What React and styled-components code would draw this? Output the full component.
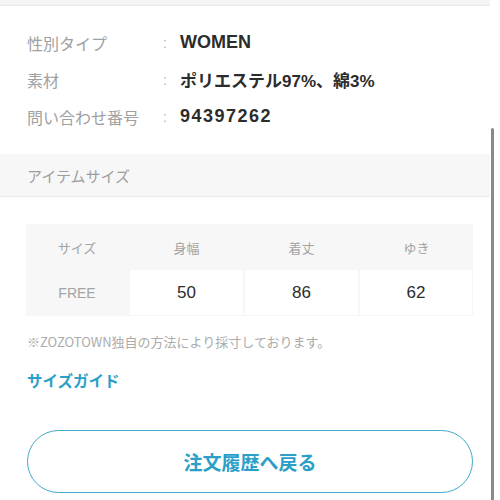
import styled, { createGlobalStyle } from "styled-components";

const GlobalStyle = createGlobalStyle`
  html, body {
    margin: 0;
    padding: 0;
    background: #ffffff;
  }
  body {
    font-family: "Liberation Sans", "Noto Sans CJK JP", sans-serif;
    width: 500px;
    height: 500px;
    overflow: hidden;
  }
`;

const Page = styled.div`
  position: relative;
  width: 500px;
  height: 500px;
  overflow: hidden;
`;

const Content = styled.div`
  width: 490px;
`;

const TopBand = styled.div`
  height: 5px;
  background: #f5f5f5;
  border-bottom: 1px solid #e9e9e9;
`;

const InfoList = styled.dl`
  margin: 0;
  padding: 18px 0 19px 27px;
`;

const InfoRow = styled.div`
  display: grid;
  grid-template-columns: 136px 17px 1fr;
  height: 37px;
  align-items: center;
`;

const Label = styled.dt`
  font-size: 16px;
  color: #a0a0a0;
  font-family: "Noto Sans CJK JP", sans-serif;
`;

const Colon = styled.span`
  font-size: 14px;
  color: #b5b5b5;
`;

const Value = styled.dd`
  margin: 0;
  font-size: ${(p) => p.$size || "18px"};
  font-weight: bold;
  color: #2c2c2c;
  letter-spacing: ${(p) => (p.$digits ? "1.5px" : "0")};
`;

const SectionHead = styled.div`
  height: 42px;
  display: flex;
  align-items: center;
  padding-left: 27px;
  background: #f7f7f7;
  border-bottom: 1px solid #ebebeb;
  font-size: 15px;
  color: #9d9d9d;
  font-family: "Noto Sans CJK JP", sans-serif;
`;

const SizeBody = styled.div`
  padding: 27px 17px 0 26px;
`;

const SizeTable = styled.div`
  display: grid;
  grid-template-columns: 102px 1fr 1fr 1fr;
  grid-template-rows: 46px 46px;
  column-gap: 2px;
  background: #f7f7f7;
  width: 447px;
`;

const Cell = styled.div`
  display: flex;
  align-items: center;
  justify-content: center;
  background: ${(p) => (p.$white ? "#ffffff" : "transparent")};
  color: ${(p) => (p.$white ? "#2c2c2c" : "#a3a3a3")};
  font-size: ${(p) => (p.$white ? "17px" : "13px")};
  font-family: "Liberation Sans", "Noto Sans CJK JP", sans-serif;
  margin-bottom: ${(p) => (p.$white ? "1px" : "0")};
  margin-right: ${(p) => (p.$last ? "1px" : "0")};
`;

const FreeCell = styled(Cell)`
  font-size: 14px;
`;

const Note = styled.p`
  margin: 16px 0 0 1px;
  font-size: 13px;
  color: #ababab;
  font-family: "Noto Sans CJK JP", sans-serif;
`;

const GuideLink = styled.a`
  display: block;
  margin-top: 18px;
  margin-left: 1px;
  font-size: 15.5px;
  font-weight: bold;
  color: #2b9fc8;
  text-decoration: none;
  font-family: "Noto Sans CJK JP", sans-serif;
`;

const BackButton = styled.button`
  display: flex;
  align-items: center;
  justify-content: center;
  box-sizing: border-box;
  margin-top: 39px;
  margin-left: 1px;
  width: 446px;
  height: 63px;
  border: 1.5px solid #40aac8;
  border-radius: 32px;
  background: #ffffff;
  color: #2b9fc8;
  font-size: 19px;
  font-weight: bold;
  font-family: "Noto Sans CJK JP", sans-serif;
`;

const ScrollThumb = styled.div`
  position: absolute;
  left: 491px;
  top: 128px;
  width: 3px;
  height: 380px;
  background: #8a8a8a;
  border-radius: 2px;
`;

const info = [
  { label: "性別タイプ", value: "WOMEN" },
  { label: "素材", value: "ポリエステル97%、綿3%", size: "17px" },
  { label: "問い合わせ番号", value: "94397262", digits: true },
];

const heads = ["サイズ", "身幅", "着丈", "ゆき"];
const sizes = ["50", "86", "62"];

export default function App() {
  return (
    <Page>
      <GlobalStyle />
      <Content>
        <TopBand />
        <InfoList>
          {info.map((r) => (
            <InfoRow key={r.label}>
              <Label>{r.label}</Label>
              <Colon>:</Colon>
              <Value $digits={r.digits} $size={r.size}>
                {r.value}
              </Value>
            </InfoRow>
          ))}
        </InfoList>
        <SectionHead>アイテムサイズ</SectionHead>
        <SizeBody>
          <SizeTable>
            {heads.map((h) => (
              <Cell key={h}>{h}</Cell>
            ))}
            <FreeCell>FREE</FreeCell>
            {sizes.map((s, i) => (
              <Cell key={i} $white $last={i === sizes.length - 1}>
                {s}
              </Cell>
            ))}
          </SizeTable>
          <Note>※ZOZOTOWN独自の方法により採寸しております。</Note>
          <GuideLink href="#">サイズガイド</GuideLink>
          <BackButton>注文履歴へ戻る</BackButton>
        </SizeBody>
      </Content>
      <ScrollThumb />
    </Page>
  );
}
